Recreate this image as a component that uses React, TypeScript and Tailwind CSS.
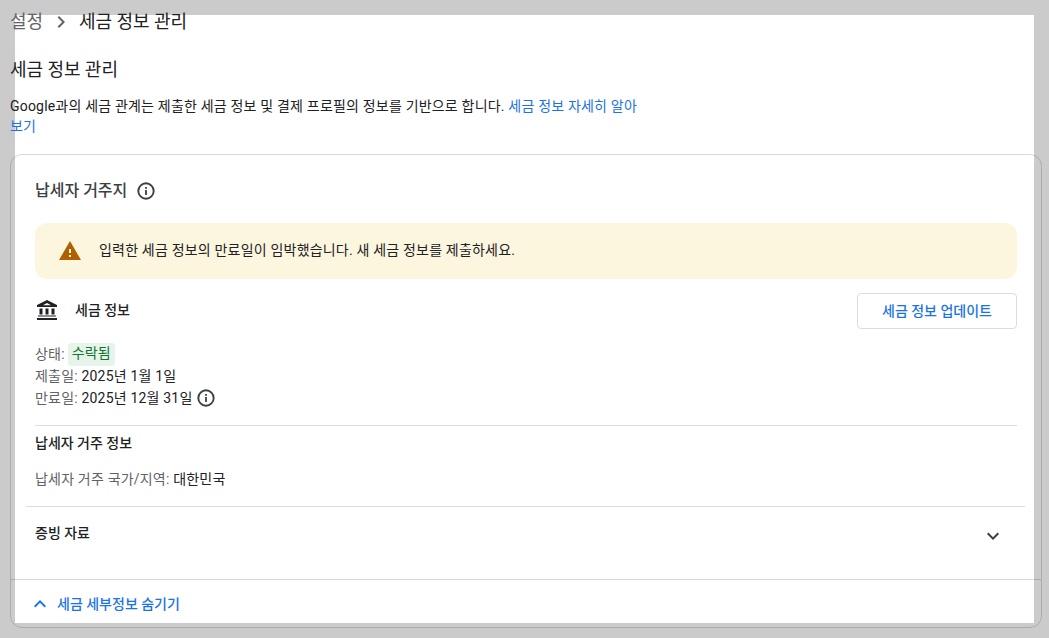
import React from "react";
import { MdWarning, MdExpandMore, MdExpandLess, MdChevronRight } from "react-icons/md";

const font = "font-['Roboto','Noto_Sans_CJK_KR',sans-serif]";

function Info() {
  return (
    <svg width="20" height="20" viewBox="0 0 20 20" fill="none" className="shrink-0 text-[#3c4043]">
      <circle cx="10" cy="10" r="7.7" stroke="currentColor" strokeWidth="1.9" />
      <rect x="9.1" y="9" width="1.8" height="5" fill="currentColor" />
      <rect x="9.1" y="6" width="1.8" height="1.8" fill="currentColor" />
    </svg>
  );
}

function Bank() {
  return (
    <svg width="24" height="24" viewBox="0 0 24 24" className="shrink-0 text-[#202124]" fill="currentColor">
      <path d="M12 2 2 7v2h20V7L12 2Zm-4 5.2L12 5l4 2.2H8Z" />
      <rect x="4.5" y="10.5" width="3" height="6" />
      <rect x="10.5" y="10.5" width="3" height="6" />
      <rect x="16.5" y="10.5" width="3" height="6" />
      <rect x="3" y="17.5" width="18" height="1" />
      <rect x="2" y="20" width="20" height="2" />
    </svg>
  );
}

export default function App() {
  return (
    <div className={`${font} box-border h-[638px] w-[1049px] border-[15px] border-[#cbcbcb] bg-white text-[14px] leading-5 tracking-[0.19px] text-[#202124]`}>
      <div className="-mx-[5px] -mt-[5px] flex flex-col">
        <div className="flex h-[24px] items-center text-[18px] leading-6 tracking-[-0.05px]">
          <span className="text-[#5f6368]">설정</span>
          <MdChevronRight className="mx-[6px] text-[#5f6368]" size={24} />
          <span>세금 정보 관리</span>
        </div>
        <h1 className="mt-[24px] text-[18px] leading-6 font-normal tracking-[-0.05px]">세금 정보 관리</h1>
        <p className="mt-[14px] w-[630px]">
          Google과의 세금 관계는 제출한 세금 정보 및 결제 프로필의 정보를 기반으로 합니다. <span className="text-[#1a73e8]">세금 정보 자세히 알아보기</span>
        </p>
        <section className="mt-[18px] box-border flex h-[474px] w-[1032px] flex-col rounded-[12px] border border-black/15">
          <div className="flex flex-col px-[24px] pt-[24px]">
            <div className="flex h-[24px] items-center gap-[9px]">
              <h2 className="text-[16px] leading-6 font-medium tracking-normal text-[#3c4043]">납세자 거주지</h2>
              <Info />
            </div>
            <div className="mt-[20px] flex h-[56px] items-center gap-[17px] rounded-[12px] bg-[#fdf6df] pl-[23px]">
              <MdWarning size={24} className="text-[#b06000]" />
              <span className="-mt-[2px]">입력한 세금 정보의 만료일이 임박했습니다. 새 세금 정보를 제출하세요.</span>
            </div>
            <div className="mt-[14px] flex items-center justify-between">
              <div className="-mt-[3px] flex items-center gap-[16px]">
                <Bank />
                <span className="font-medium tracking-normal">세금 정보</span>
              </div>
              <button className="box-border h-[36px] w-[160px] rounded-[4px] border border-[#dadce0] font-medium tracking-normal text-[#1a73e8]">세금 정보 업데이트</button>
            </div>
            <div className="mt-[14px] flex h-[23px] items-center gap-[3px]">
              <span className="-mt-[2px] text-[#5f6368]">상태:</span>
              <span className="rounded-[3px] bg-[#e6f4ea] px-[4px] pb-[2px] leading-[21px] text-[#137333]">수락됨</span>
            </div>
            <div className="h-[21px] leading-[21px]"><span className="text-[#5f6368]">제출일:</span> 2025년 1월 1일</div>
            <div className="flex h-[21px] items-center gap-[4px]">
              <span><span className="text-[#5f6368]">만료일:</span> 2025년 12월 31일</span>
              <Info />
            </div>
            <div className="mt-[17px] border-t border-[#dadce0] pt-[7px] font-medium tracking-normal">납세자 거주 정보</div>
            <div className="mt-[16px]"><span className="text-[#5f6368]">납세자 거주 국가/지역:</span> 대한민국</div>
          </div>
          <div className="mr-[16px] ml-[15px] mt-[17px] flex h-[56px] items-center justify-between border-t border-[#dadce0] pr-[20px] pl-[9px]">
            <span className="-mt-[3px] font-medium tracking-normal">증빙 자료</span>
            <MdExpandMore size={24} className="mt-[2px] text-[#3c4043]" />
          </div>
          <div className="mt-[17px] flex h-[48px] items-center gap-[5px] border-t border-black/15 pl-[17px] font-medium tracking-normal text-[#1a73e8]">
            <MdExpandLess size={24} />
            <span>세금 세부정보 숨기기</span>
          </div>
        </section>
      </div>
    </div>
  );
}
